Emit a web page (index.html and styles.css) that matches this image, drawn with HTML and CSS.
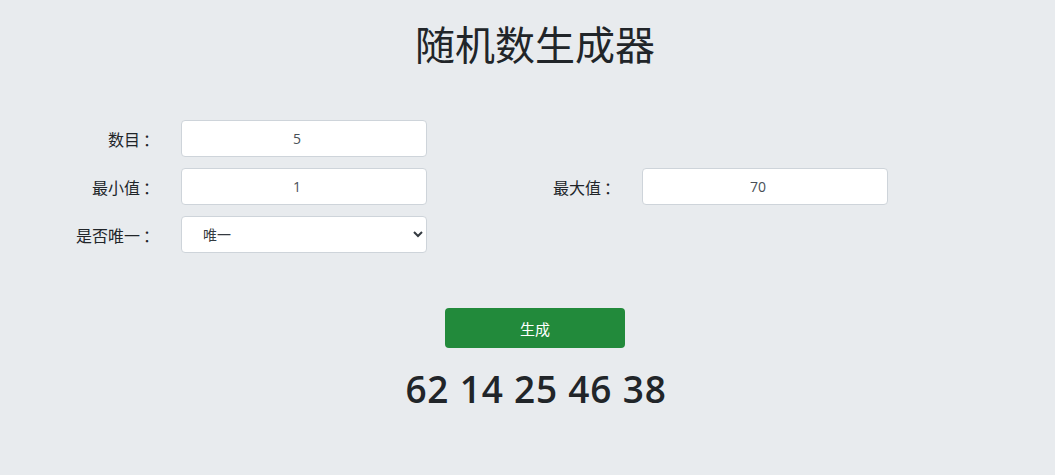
FILE: index.html
```html
<!DOCTYPE html>
<html lang="zh">
<head>
<meta charset="utf-8">
<title>随机数生成器</title>
<link rel="stylesheet" href="styles.css">
</head>
<body>
<div class="page">
  <h1 class="title">随机数生成器</h1>
  <form class="form">
    <label class="label">数目<span class="colon">：</span></label>
    <input class="field" type="text" value="5">
    <span class="empty"></span>
    <span class="empty"></span>

    <label class="label">最小值<span class="colon">：</span></label>
    <input class="field" type="text" value="1">
    <label class="label">最大值<span class="colon">：</span></label>
    <input class="field" type="text" value="70">

    <label class="label">是否唯一<span class="colon">：</span></label>
    <select class="field select">
      <option>唯一</option>
      <option>不唯一</option>
    </select>
    <span class="empty"></span>
    <span class="empty"></span>
  </form>
  <div class="actions">
    <button class="btn" type="button">生成</button>
  </div>
  <div class="result">62 14 25 46 38</div>
</div>
</body>
</html>
```
FILE: styles.css
```css
html, body {
  margin: 0;
  padding: 0;
  background: #e8ebee;
  color: #212529;
  font-family: "Open Sans", "Noto Sans CJK SC", sans-serif;
}
.page {
  width: 1055px;
  height: 475px;
  padding-top: 19px;
  box-sizing: border-box;
}
.title {
  margin: 0 0 0 15px;
  text-align: center;
  font-weight: 400;
  font-size: 40px;
  line-height: 52px;
  color: #212529;
}
.form {
  margin-top: 49px;
  display: grid;
  grid-template-columns: 156px 246px 165px 246px;
  column-gap: 25px;
  row-gap: 11px;
  align-items: center;
}
.label {
  text-align: right;
  font-size: 16px;
  color: #212529;
  white-space: nowrap;
}
.colon {
  display: inline-block;
  box-sizing: border-box;
  width: 16px;
  padding-left: 3px;
  overflow: visible;
}
.field {
  box-sizing: border-box;
  height: 37px;
  width: 246px;
  border: 1px solid #ced4da;
  border-radius: 4px;
  background: #fff;
  text-align: center;
  font-family: "Open Sans", "Noto Sans CJK SC", sans-serif;
  font-size: 14px;
  color: #495057;
  padding: 0 26px 0 12px;
}
.select {
  text-align: left;
  padding: 0 8px 0 17px;
  font-size: 14px;
  color: #343a40;
}
.actions {
  margin-top: 55px;
  padding-left: 15px;
  display: flex;
  justify-content: center;
}
.btn {
  width: 180px;
  height: 40px;
  border: none;
  border-radius: 4px;
  background: #228a3b;
  color: #fff;
  font-family: "Open Sans", "Noto Sans CJK SC", sans-serif;
  font-size: 15px;
}
.result {
  margin-top: 17px;
  padding-left: 17px;
  text-align: center;
  font-size: 37px;
  font-weight: 600;
  letter-spacing: 0.8px;
  line-height: 48px;
  color: #212529;
}
```
